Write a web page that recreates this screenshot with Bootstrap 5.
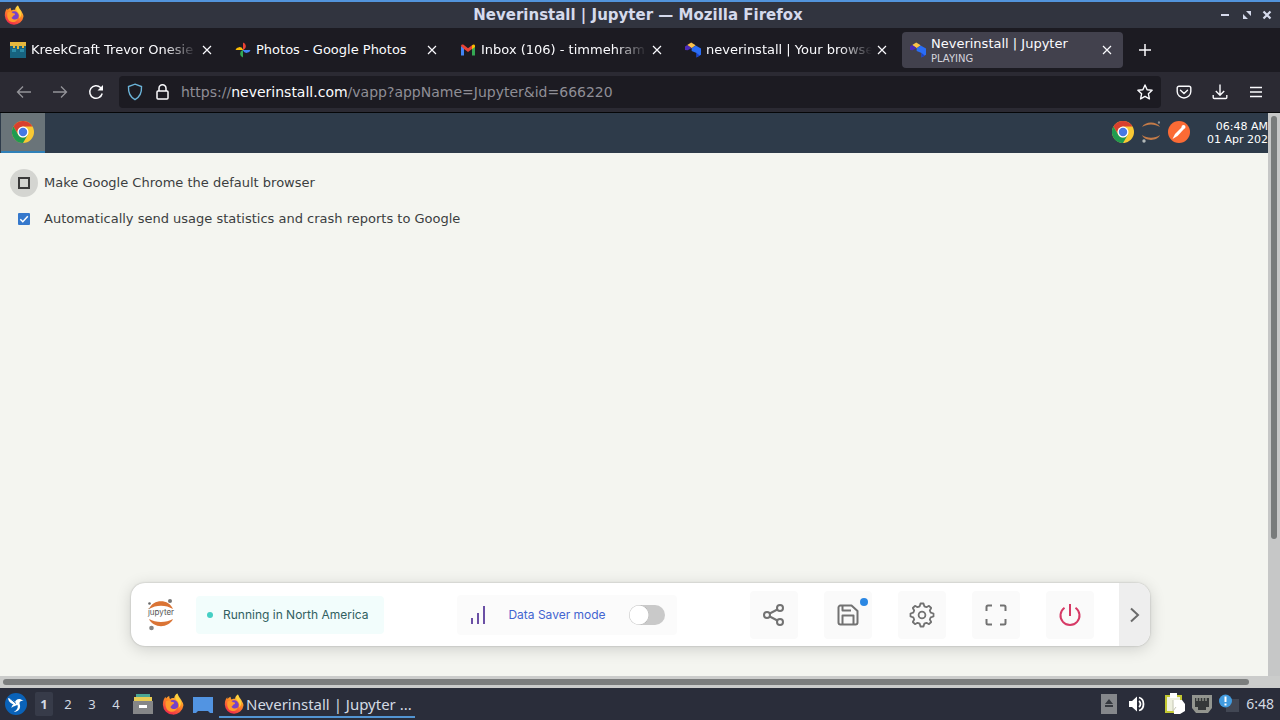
<!DOCTYPE html>
<html lang="en">
<head>
<meta charset="utf-8">
<meta name="viewport" content="width=device-width, initial-scale=1">
<title>Neverinstall | Jupyter — Mozilla Firefox</title>
<link href="https://cdn.jsdelivr.net/npm/bootstrap@5.3.0/dist/css/bootstrap.min.css" rel="stylesheet">
<style>
  body { font-family: "Noto Sans", sans-serif; background: #2a2e3b; line-height: 20px; }
  svg { display: block; flex: none; }
  button { border: 0; background: none; padding: 0; color: inherit; }
  .ui-dejavu { font-family: "DejaVu Sans", sans-serif; }

  /* window title */
  .win-title { height: 28px; border-top: 2px solid #5294dc; background: #31343f; color: #d5daec; padding: 0 8px 0 4px; }
  .win-title h1 { font-size: 15px; font-weight: 700; line-height: 26px; }
  .win-side { width: 56px; }

  /* browser chrome */
  .tab-strip { background: #1c1b22; color: #fbfbfe; padding: 4px 2px; gap: 4px; }
  .page-tab { flex: 0 1 221px; min-width: 0; height: 36px; border-radius: 4px; padding: 0 11px 0 8px; gap: 5px; font-size: 13px; }
  .page-tab.active { background: #42414d; }
  .tab-label { flex: 1; min-width: 0; overflow: hidden; white-space: nowrap; }
  .tab-label.faded { -webkit-mask-image: linear-gradient(to left, transparent, #000 32px); mask-image: linear-gradient(to left, transparent, #000 32px); }
  .tab-text { display: block; line-height: 18px; }
  .tab-note { display: block; font-size: 10px; line-height: 12px; color: #d5d4dd; }
  .new-tab { width: 36px; }
  .tool-row { background: #2b2a33; color: #fbfbfe; padding: 4px 16px; gap: 20px; border-bottom: 1px solid #050608; }
  .url-box { background: #1c1b22; border-radius: 4px; height: 32px; padding: 0 8px; gap: 12px; margin: 0 -5px; }
  .url-text { font-size: 14px; color: #8f8e96; text-decoration: none; white-space: nowrap; overflow: hidden; }
  .url-text b { color: #fbfbfe; font-weight: 400; }

  /* streamed desktop */
  .stream { background: #f4f5f0; min-height: 0; }
  .remote-bar { background: #2e3b4a; height: 40px; padding-left: 1px; }
  .remote-app { width: 44px; height: 40px; background: #6a7479; border-bottom: 2px solid #2f80b8; }
  .remote-clock { color: #fff; font-size: 11px; line-height: 13px; width: 61px; white-space: nowrap; margin-left: 17px; }
  .remote-clock span { display: block; }
  .choices { padding: 16px 10px; gap: 8px; color: #3b3e3f; font-size: 13px; }
  .choice { gap: 6px; height: 28px; }
  .choice-halo { width: 28px; height: 28px; border-radius: 50%; }
  .choice-halo.lit { background: #d4d5d1; }
  .choice input { appearance: none; width: 12px; height: 12px; border: 2px solid #3a3a3a; margin: 0; }
  .choice input:checked { border: 0; border-radius: 1px; background: #3578cc url("data:image/svg+xml,%3Csvg xmlns='http://www.w3.org/2000/svg' viewBox='0 0 12 12'%3E%3Cpath d='M2.3 6.2l2.5 2.5 5-5.4' fill='none' stroke='white' stroke-width='1.5'/%3E%3C/svg%3E"); }

  .dock { margin: auto 118px 30px 131px; height: 63px; background: #fff; border-radius: 14px; box-shadow: 0 3px 16px rgba(0,0,0,.16), 0 0 2px rgba(0,0,0,.25); font-family: Inter, sans-serif; overflow: hidden; padding-left: 16px; }
  .dock-info { gap: 21px; }
  .region-pill { background: #f2fdfc; color: #31605f; border-radius: 4px; height: 38px; width: 188px; padding-left: 11px; gap: 10px; font-size: 12px; }
  .live-dot { width: 6px; height: 6px; border-radius: 50%; background: #45cfc4; }
  .saver { background: #fbfbfb; color: #4365d0; border-radius: 4px; height: 40px; width: 220px; padding: 0 12px; font-size: 12px; }
  .saver input { appearance: none; width: 36px; height: 20px; border-radius: 10px; margin: 0; background: radial-gradient(circle at 10px 10px, #fff 9px, #b5b5b5 10px, transparent 10px) #c9c9c9; }
  .dock-btn { width: 48px; height: 48px; background: #fafafa; border-radius: 4px; color: #727272; }
  .dock-set { gap: 26px; }
  .dock-next { width: 31px; background: #eeeeee; color: #6b6b6b; margin-left: -1px; }
  .save-dot { right: 4px; top: 7px; width: 8px; height: 8px; border-radius: 50%; background: #2b87e3; }
  .v-scroll { width: 12px; background: #c6c7c7; padding: 3px; }
  .v-thumb { height: 76%; width: 6px; border-radius: 3px; background: #787b7b; }
  .h-scroll { height: 12px; background: #cbcccb; padding: 3px 18px 3px 3px; }
  .h-thumb { height: 6px; width: 99%; border-radius: 3px; background: #7b7d7d; }

  /* desktop panel */
  .panel { height: 32px; background: #2a2d3a; color: #d3dae3; font-size: 14px; padding: 0 6px 0 5px; }
  .desks { gap: 6px; margin: 0 8px; }
  .desk { width: 18px; height: 24px; font-size: 13px; border-radius: 2px; }
  .desk.active { background: #373b49; font-weight: 700; }
  .launchers { gap: 9px; }
  .task { border-bottom: 2px solid #5294d2; height: 30px; width: 196px; padding: 4px 0 0 5px; margin-left: 6px; gap: 2px; font-size: 15px; white-space: nowrap; }
  .tray { gap: 7px; }
  .tray-gap { width: 12px; gap: 12px; }
</style>
</head>
<body class="vh-100 d-flex flex-column overflow-hidden">

<svg width="0" height="0" class="position-absolute" aria-hidden="true">
  <defs>
    <linearGradient id="fxg" x1=".8" y1="0" x2=".3" y2="1"><stop offset="0" stop-color="#ffe14b"/><stop offset=".45" stop-color="#ff8a24"/><stop offset="1" stop-color="#f0264f"/></linearGradient>
    <symbol id="firefox" viewBox="0 0 24 24">
      <path fill="url(#fxg)" d="M22 9.5C21 6.500 18.500 5 17.300 1.500c-.3-1-.5-1-.8-.9-2.200 1.200-3 3.400-3.200 5C11 5.500 10 6 9 6.700 8 5.500 7.800 4.500 8 3.200 6 4 5 5 4.300 6c-.4-.6-.3-1.700-.2-2C2.500 5 .8 8.500 1 13a11.200 11 0 0 0 22.300 1C23.500 12 22.800 10.700 22 9.500z"/>
      <circle cx="12.300" cy="13" r="5.400" fill="#7642c9"/>
      <path fill="#ff9a2b" d="M4.300 9c2.500-1.500 5-.8 6.300.9 1.300-.1 2.700.3 2.700 1.100 0 .9-1.700 1.300-2.500 2.200-.7.800-.4 1.800-1.800 1.700 1 2.600 5 3.600 7.600 1.200-1 3.800-5 5-8 4C4.500 19 3 13 4.300 9z"/>
      <path fill="#ffd23c" d="M16.500 1c-3 3-1.500 6 .5 8 2 2.500 2 5 1 7.500 4-4 3-8 1-10.500-1.500-2-2-3-2.500-5z"/>
    </symbol>
    <symbol id="chrome" viewBox="0 0 24 24">
      <circle cx="12" cy="12" r="12" fill="#f9c934"/>
      <path fill="#d8402f" d="M1.600 6A12 12 0 0 1 22.400 6H12a6 6 0 0 0-5.200 9z"/>
      <path fill="#1f9b50" d="M1.600 6A12 12 0 0 0 12 24l5.200-9A6 6 0 0 1 6.800 15z"/>
      <circle cx="12" cy="12" r="6" fill="#fff"/><circle cx="12" cy="12" r="4.600" fill="#4678e3"/>
    </symbol>
    <symbol id="never" viewBox="0 0 18 18">
      <path fill="#f9c24a" d="M2.500 3.300L7 .5l5 3.200L7.500 7z"/><path fill="#4b2bb8" d="M0 9V5.200l2.500-1.900 5 3.500L3 9.300z"/>
      <path fill="#2a6df5" d="M7.500 7L12 3.800l6 3.500v7l-5 3.200v-5L7.500 10z"/><path fill="#1c40c9" d="M13 12.500l3.500 2.800-3.500 2.200z"/>
    </symbol>
    <symbol id="cross" viewBox="0 0 10 10"><path d="M1 1l8 8M9 1L1 9" stroke="currentColor" stroke-width="1.200"/></symbol>
  </defs>
</svg>

<header class="flex-shrink-0 ui-dejavu">
  <div class="win-title d-flex align-items-center justify-content-between">
    <div class="win-side"><svg width="20" height="20"><use href="#firefox"/></svg></div>
    <h1 class="m-0">Neverinstall | Jupyter — Mozilla Firefox</h1>
    <div class="win-side d-flex justify-content-end align-items-center gap-2">
      <button aria-label="Minimize"><svg width="14" height="12"><path d="M1 6h8" stroke="currentColor" stroke-width="2"/></svg></button>
      <button aria-label="Restore"><svg width="12" height="12" fill="currentColor"><path d="M4 2h5v5zM1 5v5h5z"/></svg></button>
      <button aria-label="Close window"><svg width="10" height="12"><path d="M1.500 2.500l7 7m0-7l-7 7" stroke="currentColor" stroke-width="2.200"/></svg></button>
    </div>
  </div>

  <nav class="tab-strip d-flex" aria-label="Tabs">
    <div class="page-tab d-flex align-items-center">
      <svg width="16" height="16"><path fill="#17637f" d="M0 0h16v16H0z"/><path fill="#e5b83e" d="M0 0h16v4h-2v2h-2V4H9v3H7V4H5v2H3V4H0z"/><path fill="#2c8ca8" d="M2 7h4v3H2zM10 7h4v3h-4z"/></svg>
      <span class="tab-label faded">KreekCraft Trevor Onesie</span>
      <button aria-label="Close tab"><svg width="10" height="10"><use href="#cross"/></svg></button>
    </div>
    <div class="page-tab d-flex align-items-center">
      <svg width="16" height="16"><path fill="#ea4335" d="M8 .5A4 4 0 0 1 8.500 8H8z"/><path fill="#4285f4" d="M15.500 8A4 4 0 0 1 8 8.500V8z"/><path fill="#34a853" d="M8 15.500A4 4 0 0 1 7.500 8H8z"/><path fill="#fbbc04" d="M.5 8A4 4 0 0 1 8 7.500V8z"/></svg>
      <span class="tab-label">Photos - Google Photos</span>
      <button aria-label="Close tab"><svg width="10" height="10"><use href="#cross"/></svg></button>
    </div>
    <div class="page-tab d-flex align-items-center">
      <svg width="16" height="16"><path fill="#4285f4" d="M1 4l3 2v7.500H1z"/><path fill="#34a853" d="M12 6l3-2v9.500h-3z"/><path fill="#ea4335" d="M1 4c0-1.500 1.500-2 2.600-1.200L8 6.200l4-3V7L8 10 4 7z"/><path fill="#fbbc04" d="M12 3.200C13.500 2 15 2.500 15 4v1l-3 2.200z"/></svg>
      <span class="tab-label faded">Inbox (106) - timmehram</span>
      <button aria-label="Close tab"><svg width="10" height="10"><use href="#cross"/></svg></button>
    </div>
    <div class="page-tab d-flex align-items-center">
      <svg width="16" height="16"><use href="#never"/></svg>
      <span class="tab-label faded">neverinstall | Your browse</span>
      <button aria-label="Close tab"><svg width="10" height="10"><use href="#cross"/></svg></button>
    </div>
    <div class="page-tab active d-flex align-items-center">
      <svg width="16" height="16"><use href="#never"/></svg>
      <span class="tab-label"><span class="tab-text">Neverinstall | Jupyter</span><span class="tab-note">PLAYING</span></span>
      <button aria-label="Close tab"><svg width="10" height="10"><use href="#cross"/></svg></button>
    </div>
    <button class="new-tab d-flex align-items-center justify-content-center" aria-label="New tab"><svg width="12" height="12"><path d="M6 0v12M0 6h12" stroke="currentColor" stroke-width="1.500"/></svg></button>
  </nav>

  <div class="tool-row d-flex align-items-center">
    <button aria-label="Back" class="opacity-50"><svg width="16" height="16" fill="none" stroke="currentColor" stroke-width="1.300"><path d="M15 8H1.500M7 2.500L1.500 8 7 13.500"/></svg></button>
    <button aria-label="Forward" class="opacity-50"><svg width="16" height="16" fill="none" stroke="currentColor" stroke-width="1.300"><path d="M1 8h13.500M9 2.500L14.500 8 9 13.500"/></svg></button>
    <button aria-label="Reload"><svg width="16" height="16" fill="none" stroke="currentColor" stroke-width="1.500"><path d="M14.200 9.500A6.300 6.300 0 1 1 12.500 3.500l2 2"/><path d="M15 1v5.500H9.500z" fill="currentColor" stroke="none"/></svg></button>
    <div class="url-box d-flex align-items-center flex-grow-1">
      <svg width="16" height="18" fill="none" stroke="#6bb3d8" stroke-width="1.400"><path d="M8 1.200L14.500 3.500C14.800 9 13 14 8 16.600 3 14 1.200 9 1.500 3.500z"/></svg>
      <svg width="14" height="18" fill="none" stroke="currentColor" stroke-width="1.500"><rect x="2" y="8" width="11" height="8" rx="1"/><path d="M4 8V5.300a3.500 3.500 0 0 1 7 0V8"/></svg>
      <a class="url-text flex-grow-1" href="#">https://<b>neverinstall.com</b>/vapp?appName=Jupyter&amp;id=666220</a>
      <button aria-label="Bookmark"><svg width="16" height="16" fill="none" stroke="currentColor" stroke-width="1.400" stroke-linejoin="round"><path d="M8 1l2.100 4.700 5 .6-3.700 3.500 1 5.100L8 12.400l-4.400 2.500 1-5.100L.9 6.300l5-.6z"/></svg></button>
    </div>
    <button aria-label="Pocket"><svg width="16" height="16" fill="none" stroke="currentColor" stroke-width="1.400"><path d="M3 2.200h10a1.800 1.800 0 0 1 1.800 1.800v3.500a6.800 6.500 0 0 1-13.600 0V4A1.800 1.800 0 0 1 3 2.200z"/><path d="M4.500 6.200L8 9.500l3.500-3.300" stroke-linecap="round"/></svg></button>
    <button aria-label="Downloads"><svg width="16" height="16" fill="none" stroke="currentColor" stroke-width="1.400"><path d="M8 .5v10.500M3.800 7L8 11.200 12.200 7M1.200 11v2.500a1 1 0 0 0 1 1h11.600a1 1 0 0 0 1-1V11"/></svg></button>
    <button aria-label="Menu"><svg width="16" height="16" stroke="currentColor" stroke-width="1.500"><path d="M2 3.500h12M2 8h12M2 12.500h12"/></svg></button>
  </div>
</header>

<main class="d-flex flex-grow-1 stream">
  <div class="d-flex flex-column flex-grow-1 overflow-hidden">
    <div class="remote-bar d-flex align-items-center ui-dejavu flex-shrink-0">
      <button class="remote-app d-flex align-items-center justify-content-center me-auto" aria-label="Chrome"><svg width="22" height="22"><use href="#chrome"/></svg></button>
      <button aria-label="Open Chrome"><svg width="22" height="24" viewBox="0 0 24 26"><use href="#chrome" width="24" height="24"/></svg></button>
      <button aria-label="Open Jupyter" class="mx-2"><svg width="18" height="24" viewBox="1 1 18 24"><path fill="#c47b48" d="M1 7c3-6 15-6 18 0C14 3.500 6 3.500 1 7zM1 15c3 6.500 15 6.500 18 0-5 3.500-13 3.500-18 0z"/><circle cx="18" cy="2.500" r="1.200" fill="#8a8f92"/><circle cx="3" cy="21" r="1.700" fill="#b2b8b8"/></svg></button>
      <button aria-label="Open Postman"><svg width="22" height="24"><circle cx="11" cy="11" r="11" fill="#fb6b35"/><path d="M4.500 18l2.500-5L14 6l2 2-6.500 7z" fill="#fff"/><circle cx="15.500" cy="6" r="2" fill="#fff"/></svg></button>
      <div class="remote-clock text-end"><span>06:48 AM</span><span>01 Apr 202</span></div>
    </div>

    <form class="choices d-flex flex-column ui-dejavu">
      <label class="choice d-flex align-items-center"><span class="choice-halo lit d-flex align-items-center justify-content-center"><input type="checkbox"></span>Make Google Chrome the default browser</label>
      <label class="choice d-flex align-items-center"><span class="choice-halo d-flex align-items-center justify-content-center"><input type="checkbox" checked></span>Automatically send usage statistics and crash reports to Google</label>
    </form>

    <section class="dock d-flex align-items-center justify-content-between flex-shrink-0" aria-label="Session controls">
      <div class="dock-info d-flex align-items-center">
        <svg width="28" height="34" viewBox="0 0 28 34" role="img" aria-label="Jupyter"><path fill="#da7435" d="M2 11C6 .5 22 .5 26 11 19 6.500 9 6.500 2 11zM2 21c4 9.500 20 9.500 24 0-7 4-17 4-24 0z"/><circle cx="23" cy="3" r="2" fill="#777"/><circle cx="2.500" cy="5.500" r="1.300" fill="#666"/><circle cx="4.500" cy="30" r="2.300" fill="#858585"/><text x="14" y="17" text-anchor="middle" font-size="8" fill="#555">jupyter</text></svg>
        <div class="region-pill d-flex align-items-center"><span class="live-dot"></span>Running in North America</div>
      </div>
      <div class="saver d-flex align-items-center justify-content-between">
        <svg width="16" height="20" fill="none" stroke="#6b50a5" stroke-width="2"><path d="M3 19v-6M9 19V8M15 19V1"/></svg>
        <label for="saver">Data Saver mode</label>
        <input id="saver" type="checkbox" role="switch">
      </div>
      <div class="d-flex align-self-stretch align-items-center dock-set">
        <button class="dock-btn d-flex align-items-center justify-content-center" aria-label="Share"><svg width="24" height="24" fill="none" stroke="currentColor" stroke-width="2"><circle cx="5" cy="12" r="3"/><circle cx="18" cy="5" r="3"/><circle cx="18" cy="19" r="3"/><path d="M7.700 10.500l7.700-4M7.700 13.500l7.700 4"/></svg></button>
        <button class="dock-btn d-flex align-items-center justify-content-center position-relative" aria-label="Save"><svg width="24" height="24" fill="none" stroke="currentColor" stroke-width="2" stroke-linejoin="round"><path d="M4 2.500h11.500L21.500 8v11.500a2 2 0 0 1-2 2h-15a2 2 0 0 1-2-2V4.500a2 2 0 0 1 2-2zM6.500 21.500v-9h11v9M6.500 3v4.500H15"/></svg><span class="save-dot position-absolute"></span></button>
        <button class="dock-btn d-flex align-items-center justify-content-center" aria-label="Settings"><svg width="26" height="26" viewBox="-13 -13 26 26" fill="none" stroke="currentColor" stroke-width="1.800" stroke-linejoin="round"><circle r="3.400"/><path d="M-1.500-11.500H1.500L2.300-8.700 4.500-7.800 7-9.200 9.200-7 7.800-4.500 8.700-2.300 11.500-1.500V1.500L8.700 2.300 7.800 4.500 9.200 7 7 9.200 4.500 7.800 2.300 8.700 1.500 11.500H-1.500L-2.300 8.700-4.500 7.800-7 9.200-9.200 7-7.800 4.500-8.700 2.300-11.500 1.500V-1.500L-8.700-2.300-7.800-4.500-9.200-7-7-9.200-4.500-7.800-2.300-8.700z"/></svg></button>
        <button class="dock-btn d-flex align-items-center justify-content-center" aria-label="Full screen"><svg width="24" height="24" fill="none" stroke="currentColor" stroke-width="2"><path d="M2.500 8V4a1.500 1.500 0 0 1 1.500-1.500h4M16 2.500h4A1.500 1.500 0 0 1 21.500 4v4M21.500 16v4a1.500 1.500 0 0 1-1.500 1.500h-4M8 21.500H4A1.500 1.500 0 0 1 2.500 20v-4"/></svg></button>
        <button class="dock-btn d-flex align-items-center justify-content-center" aria-label="Power"><svg width="24" height="24" fill="none" stroke="#d63a66" stroke-width="2"><path d="M12 1v12M6.500 4.800a9.500 9.500 0 1 0 11 0"/></svg></button>
        <button class="dock-next align-self-stretch d-flex align-items-center justify-content-center" aria-label="Collapse"><svg width="12" height="16" fill="none" stroke="currentColor" stroke-width="2"><path d="M2 1.500L9 8l-7 6.500"/></svg></button>
      </div>
    </section>
  </div>
  <div class="v-scroll flex-shrink-0"><div class="v-thumb"></div></div>
</main>
<div class="h-scroll flex-shrink-0"><div class="h-thumb"></div></div>

<footer class="panel d-flex align-items-center flex-shrink-0">
  <button aria-label="Start menu"><svg width="22" height="22"><circle cx="11" cy="11" r="11" fill="#0a62b8"/><path fill="#fff" d="M3 5c3 1 5 2 7 4 .5-2 2.500-3.500 5-3l4 2c-3-.5-4.500.5-4.500 2.500 2 4.500-1 8.500-6 8.500 3-1.500 5-4 4-7-2 1-4.500 1-6 3 0-2 1-3 2-4-2.500 0-5-2.500-5.500-6z"/><path d="M5 5.500l6 5" stroke="#0a62b8"/></svg></button>
  <div class="desks d-flex">
    <button class="desk active">1</button><button class="desk">2</button><button class="desk">3</button><button class="desk">4</button>
  </div>
  <div class="launchers d-flex align-items-center">
    <button aria-label="Files"><svg width="20" height="22" viewBox="1 0 20 22"><path fill="#4aa795" d="M4 1h14v4H4z"/><path fill="#e8cc55" d="M2 4h18v5H2z"/><path fill="#858688" d="M1 8h20v13H1z"/><path fill="#fff" d="M7 12h8v3H7z"/></svg></button>
    <button aria-label="Firefox"><svg width="22" height="22"><use href="#firefox"/></svg></button>
    <button aria-label="Show desktop"><svg width="20" height="20" viewBox="1 0 20 20"><path fill="#5294e2" d="M1 3h20v16h-3l-2-2H6l-2 2H1z"/></svg></button>
  </div>
  <button class="task d-flex align-items-center align-self-start"><svg width="20" height="20"><use href="#firefox"/></svg>Neverinstall | Jupyter ...</button>
  <div class="tray ms-auto d-flex align-items-center">
    <svg width="16" height="20"><path fill="#85878b" d="M0 0h16v20H0z"/><path fill="#35383f" d="M8 5l4 5H4zM4 11h8v2H4z"/></svg>
    <svg class="ms-1 me-1" width="18" height="18"><path fill="#fff" d="M1 6h3l5-4.500v15L4 12H1z"/><path fill="none" stroke="#fff" stroke-width="1.800" d="M11 6c2 1.500 2 4.500 0 6M11 2.500c6 1.500 6 11.500 0 13"/></svg>
    <svg class="ms-2" width="20" height="22"><path fill="#c3c832" d="M0 2h17v18H0z"/><path fill="#eef0df" d="M2 4h13v14H2z"/><path fill="#fff" d="M5 0h7v5H5zM8 7h9l3 4v7l-5 3H9z"/><path fill="none" stroke="#c6c8b6" d="M8 7v11l3-4"/></svg>
    <svg width="20" height="20"><path fill="#93958f" d="M0 1h20v13l-4 5H4l-4-5z"/><path fill="#353839" d="M3 4h14v9h-3v3H6v-3H3z"/><path stroke="#b9bbaf" d="M5 4v3M8 4v3M11 4v3M14 4v3"/></svg>
    <svg width="20" height="20"><path fill="#424754" d="M7 5h13v13H7z"/><circle cx="6.500" cy="7" r="6.500" fill="#429bdf"/><path stroke="#fff" stroke-width="2" d="M6.500 2.500V8M6.500 9.500v2"/></svg>
    <time>6:48</time>
  </div>
</footer>
<script src="https://cdn.jsdelivr.net/npm/bootstrap@5.3.0/dist/js/bootstrap.bundle.min.js"></script>
</body>
</html>
